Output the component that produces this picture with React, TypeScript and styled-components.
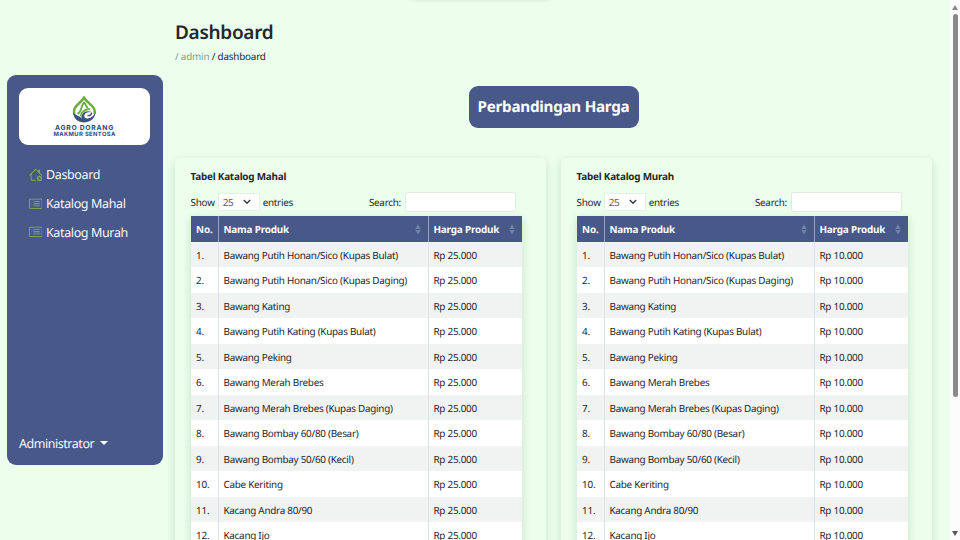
import React from 'react';
import styled, { createGlobalStyle } from 'styled-components';
import { BsCardList, BsHouseGear } from 'react-icons/bs';

const Global = createGlobalStyle`
  *, *::before, *::after { box-sizing: border-box; }
  body {
    margin: 0;
    overflow: hidden;
    background: #ebffec;
    color: #24272c;
    font-family: "Noto Sans", "Open Sans", sans-serif;
    font-size: 9.9px;
    letter-spacing: -0.255px;
    text-rendering: geometricPrecision;
  }
`;

const Page = styled.div`
  display: flex;
  width: 960px;
  height: 540px;
  overflow: hidden;
  background: #ebffec;
`;

const Sidebar = styled.aside`
  flex: none;
  display: flex;
  flex-direction: column;
  width: 156px;
  height: 390px;
  margin: 75px 12.5px 0 6.5px;
  padding: 13px 12.5px 13px;
  border-radius: 9px;
  background: #485888;
  color: #f4f7fb;
`;

const LogoCard = styled.div`
  display: flex;
  flex-direction: column;
  align-items: center;
  height: 57px;
  padding-top: 8px;
  border-radius: 9px;
  background: #fff;
  color: #2c4a84;
`;

const LogoName = styled.div<{ $size: number; $gap: number }>`
  flex: none;
  font: 700 ${(p) => p.$size}px/${(p) => p.$size}px "Inter", sans-serif;
  letter-spacing: ${(p) => p.$gap}px;
  white-space: nowrap;
`;

const Nav = styled.nav`
  display: flex;
  flex-direction: column;
  padding: 15px 0 0 9.5px;
`;

const NavLink = styled.a`
  display: flex;
  align-items: center;
  gap: 4px;
  height: 28.9px;
  font-size: 12.5px;
  letter-spacing: -0.37px;
  white-space: nowrap;
  svg { flex: none; width: 13.5px; height: 13.5px; color: #7dbb40; }
`;

const User = styled.div`
  display: flex;
  align-items: center;
  gap: 6px;
  margin-top: auto;
  height: 18px;
  font-size: 12.5px;
  letter-spacing: -0.46px;
`;

const Caret = styled.span`
  border: 4px solid transparent;
  border-top-color: #fff;
  border-bottom: 0;
`;

const Main = styled.main`
  display: flex;
  flex-direction: column;
  width: 757px;
  padding-top: 19px;
  & > * { flex-shrink: 0; }
`;

const Title = styled.h1`
  margin: 0;
  font-size: 19px;
  font-weight: 600;
  line-height: 26px;
  letter-spacing: -0.3px;
`;

const Crumbs = styled.div`
  margin-top: 3.5px;
  line-height: 15px;
  letter-spacing: -0.2px;
  span { color: #8d989b; }
`;

const Banner = styled.div`
  align-self: center;
  display: grid;
  place-items: center;
  width: 170px;
  height: 42px;
  margin: 22px 0 30.5px;
  border-radius: 9px;
  background: #485888;
  color: #fff;
  font-size: 15.2px;
  font-weight: 700;
  white-space: nowrap;
`;

const Cards = styled.div`
  display: flex;
  gap: 15px;
`;

const Card = styled.section`
  width: 371px;
  height: 420px;
  padding: 11px 24px 0 15.6px;
  border-radius: 5px;
  box-shadow: 0 3px 10px rgba(20, 60, 30, 0.15);
`;

const CardTitle = styled.h2`
  margin: 0;
  font-size: 9.9px;
  font-weight: 700;
  line-height: 14px;
  letter-spacing: -0.21px;
`;

const Controls = styled.div`
  display: flex;
  align-items: center;
  height: 20px;
  margin: 9.4px 0 4px;
`;

const Select = styled.div`
  display: flex;
  align-items: center;
  justify-content: space-between;
  width: 42px;
  height: 18px;
  margin: 0 3px;
  padding: 0 8px 0 4px;
  border: 1px solid #e4efe6;
  border-radius: 2px;
  background: #fff;
  color: #555b62;
`;

const Search = styled.label`
  display: flex;
  align-items: center;
  gap: 4px;
  margin: 0 6px 0 auto;
`;

const Input = styled.input`
  width: 111px;
  height: 20px;
  padding: 0 4px;
  border: 1px solid #dfecdf;
  border-radius: 3px;
  background: #fff;
`;

const Table = styled.div`
  width: 331.4px;
  box-shadow: 0 3px 9px rgba(20, 60, 30, 0.16);
`;

const Row = styled.div<{ $kind: 'head' | 'odd' | 'even' }>`
  display: grid;
  grid-template-columns: 27.4px 210px 94px;
  height: ${(p) => (p.$kind === 'head' ? 25.6 : 25.5)}px;
  background: ${(p) => ({ head: '#485888', odd: '#f1f2f2', even: '#fff' })[p.$kind]};
  color: ${(p) => (p.$kind === 'head' ? '#fff' : 'inherit')};
  font-weight: ${(p) => (p.$kind === 'head' ? 700 : 400)};
  letter-spacing: ${(p) => (p.$kind === 'head' ? -0.17 : -0.26)}px;
`;

const Cell = styled.div`
  display: flex;
  align-items: center;
  justify-content: space-between;
  padding: 0 7px 0 5.5px;
  white-space: nowrap;
  & + & { border-left: 1px solid #dce2ed; padding-left: 4.5px; }
  ${Row}:first-child & { border-color: #97a3c0; }
`;

const Scrollbar = styled.div`
  flex: none;
  display: flex;
  flex-direction: column;
  align-items: center;
  justify-content: space-between;
  width: 10px;
  height: 540px;
  margin-left: auto;
  padding: 5px 0 4px;
  background: #fbfcfb;
`;

const Thumb = styled.div`
  width: 5px;
  height: 383px;
  margin: 4px 0 auto;
  border-radius: 3px;
  background: #8a8a8a;
`;

const Arrow = styled.i<{ $down?: boolean }>`
  border: 3px solid transparent;
  border-${(p) => (p.$down ? 'top' : 'bottom')}: 5px solid ${(p) => (p.$down ? '#555' : '#888')};
  border-${(p) => (p.$down ? 'bottom' : 'top')}: 0;
`;

const TopShade = styled.div`
  position: absolute;
  top: -7px;
  left: 412px;
  width: 138px;
  height: 6px;
  box-shadow: 0 0 5px rgba(0, 0, 0, 0.15);
`;

const products = [
  'Bawang Putih Honan/Sico (Kupas Bulat)',
  'Bawang Putih Honan/Sico (Kupas Daging)',
  'Bawang Kating',
  'Bawang Putih Kating (Kupas Bulat)',
  'Bawang Peking',
  'Bawang Merah Brebes',
  'Bawang Merah Brebes (Kupas Daging)',
  'Bawang Bombay 60/80 (Besar)',
  'Bawang Bombay 50/60 (Kecil)',
  'Cabe Keriting',
  'Kacang Andra 80/90',
  'Kacang Ijo',
];

const Emblem = () => (
  <svg width="26" height="29" viewBox="0 0 26 29" fill="none">
    <path d="M2.500 18.500C0 10.500 8 8 12 1.800C16 8 24.500 10.500 22.500 18" stroke="#6fab42" strokeWidth="2.500" />
    <path d="M5.500 18C10.500 15 8.500 10 12 6.500C15 9 13.500 12.500 18 13.500M8.500 20.500C9 16.500 11 14.500 15.500 13.500" stroke="#6fab42" strokeWidth="1.800" />
    <path d="M1.200 16.500C1.500 23 6.500 26.500 12 26.500S23 23 23.500 16.500C21 21.500 16.500 23.500 13 22C11 18.500 14 15.500 19.500 16C14 13.500 9 17 9.500 22.500C7.500 19.500 4.500 20 1.200 16.500z" fill="#365383" />
    <path d="M15.500 19.500C17.500 20 19.500 19 19.500 16.500" stroke="#365383" strokeWidth="1.400" />
  </svg>
);

const Sorter = () => (
  <svg width="6" height="11" viewBox="0 0 6 11" fill="#7080a7">
    <path d="M3 .3L5.700 5H.3zM3 10.700L.3 6h5.400z" />
  </svg>
);

const Chevron = () => (
  <svg width="8" height="6" viewBox="0 0 8 6" fill="none" stroke="#343a40" strokeWidth="1.400">
    <path d="M.8 1L4 4.300L7.200 1" />
  </svg>
);

const Catalog = ({ name, price }: { name: string; price: string }) => (
  <Card>
    <CardTitle>{name}</CardTitle>
    <Controls>
      <span>Show</span>
      <Select>25<Chevron /></Select>
      <span>entries</span>
      <Search>Search:<Input /></Search>
    </Controls>
    <Table>
      <Row $kind="head">
        <Cell>No.</Cell>
        <Cell>Nama Produk<Sorter /></Cell>
        <Cell>Harga Produk<Sorter /></Cell>
      </Row>
      {products.map((product, i) => (
        <Row key={product} $kind={i % 2 ? 'even' : 'odd'}>
          <Cell>{i + 1}.</Cell>
          <Cell>{product}</Cell>
          <Cell>{price}</Cell>
        </Row>
      ))}
    </Table>
  </Card>
);

export default function App() {
  return (
    <Page>
      <Global />
      <TopShade />
      <Sidebar>
        <LogoCard>
          <Emblem />
          <LogoName $size={6.8} $gap={0.7}>AGRO DORANG</LogoName>
          <LogoName $size={5.8} $gap={0.4}>MAKMUR SENTOSA</LogoName>
        </LogoCard>
        <Nav>
          <NavLink><BsHouseGear />Dasboard</NavLink>
          <NavLink><BsCardList />Katalog Mahal</NavLink>
          <NavLink><BsCardList />Katalog Murah</NavLink>
        </Nav>
        <User>Administrator <Caret /></User>
      </Sidebar>
      <Main>
        <Title>Dashboard</Title>
        <Crumbs><span>/ admin</span> / dashboard</Crumbs>
        <Banner>Perbandingan Harga</Banner>
        <Cards>
          <Catalog name="Tabel Katalog Mahal" price="Rp 25.000" />
          <Catalog name="Tabel Katalog Murah" price="Rp 10.000" />
        </Cards>
      </Main>
      <Scrollbar>
        <Arrow />
        <Thumb />
        <Arrow $down />
      </Scrollbar>
    </Page>
  );
}
